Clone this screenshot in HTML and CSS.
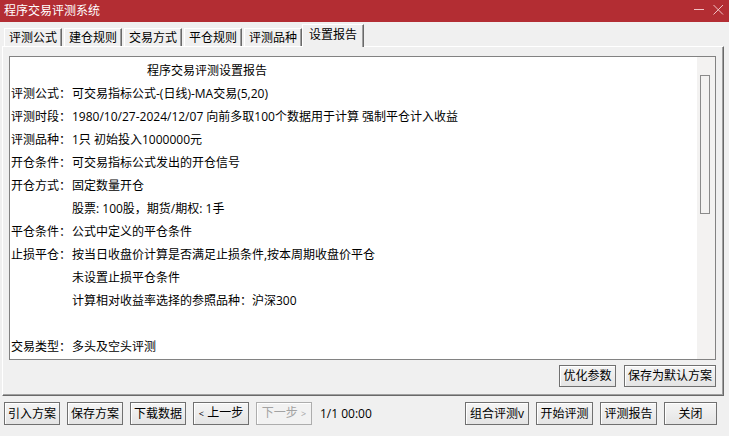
FILE: index.html
```html
<!DOCTYPE html>
<html lang="zh-CN">
<head>
<meta charset="utf-8">
<title>程序交易评测系统</title>
<link rel="stylesheet" href="styles.css">
</head>
<body>
<div class="window">
  <div class="titlebar">
    <span class="title">程序交易评测系统</span>
    <svg class="controls" width="32" height="22" viewBox="0 0 32 22">
      <line x1="1" y1="9.5" x2="11" y2="9.5" stroke="#f1c2c4" stroke-width="1"/>
      <path d="M20.5 5 L30 14.5 M30 5 L20.5 14.5" stroke="#f1c2c4" stroke-width="1" fill="none"/>
    </svg>
  </div>
  <div class="tabs">
    <div class="tab">评测公式</div>
    <div class="tab">建仓规则</div>
    <div class="tab">交易方式</div>
    <div class="tab">平仓规则</div>
    <div class="tab">评测品种</div>
    <div class="tab active">设置报告</div>
  </div>
  <div class="panel">
    <div class="report">
      <div class="report-body">
        <div class="line heading">程序交易评测设置报告</div>
        <div class="line"><span class="lbl">评测公式：</span><span>可交易指标公式-(日线)-MA交易(5,20)</span></div>
        <div class="line"><span class="lbl">评测时段：</span><span>1980/10/27-2024/12/07 向前多取100个数据用于计算 强制平仓计入收益</span></div>
        <div class="line"><span class="lbl">评测品种：</span><span>1只 初始投入1000000元</span></div>
        <div class="line"><span class="lbl">开仓条件：</span><span>可交易指标公式发出的开仓信号</span></div>
        <div class="line"><span class="lbl">开仓方式：</span><span>固定数量开仓</span></div>
        <div class="line indent">股票: 100股，期货/期权: 1手</div>
        <div class="line"><span class="lbl">平仓条件：</span><span>公式中定义的平仓条件</span></div>
        <div class="line"><span class="lbl">止损平仓：</span><span>按当日收盘价计算是否满足止损条件,按本周期收盘价平仓</span></div>
        <div class="line indent">未设置止损平仓条件</div>
        <div class="line indent">计算相对收益率选择的参照品种：沪深300</div>
        <div class="line"></div>
        <div class="line"><span class="lbl">交易类型：</span><span>多头及空头评测</span></div>
        <div class="line"></div>
      </div>
      <div class="scrollbar"><div class="thumb"></div></div>
    </div>
    <div class="panel-actions">
      <button class="btn w57">优化参数</button>
      <button class="btn w92">保存为默认方案</button>
    </div>
  </div>
  <div class="footer">
    <div class="group">
      <button class="btn w56">引入方案</button>
      <button class="btn w56">保存方案</button>
      <button class="btn w56">下载数据</button>
      <button class="btn w56"><span class="chev">&lt;</span> 上一步</button>
      <button class="btn w56 disabled">下一步 <span class="chev">&gt;</span></button>
      <span class="status">1/1 00:00</span>
    </div>
    <div class="group right">
      <button class="btn w64">组合评测v</button>
      <button class="btn w57">开始评测</button>
      <button class="btn w57">评测报告</button>
      <button class="btn w53">关闭</button>
    </div>
  </div>
</div>
</body>
</html>
```

FILE: styles.css
```css
* { box-sizing: border-box; }
html, body {
  margin: 0;
  padding: 0;
  width: 729px;
  height: 436px;
  overflow: hidden;
  background: #f0f0f0;
}
body {
  font-family: "Open Sans", "Noto Sans CJK SC", sans-serif;
  font-size: 12px;
  color: #000;
}
.window {
  width: 729px;
  height: 436px;
  display: flex;
  flex-direction: column;
  background: #f0f0f0;
}
.titlebar {
  height: 22px;
  background: #b32d33;
  display: flex;
  align-items: center;
  justify-content: space-between;
  padding-left: 4px;
  padding-right: 4px;
  flex-shrink: 0;
}
.title {
  color: #fff;
  font-size: 12px;
  line-height: 22px;
}
.controls { display: block; }

.tabs {
  height: 24px;
  display: flex;
  align-items: flex-end;
  padding-left: 4px;
  flex-shrink: 0;
}
.tab {
  width: 58px;
  height: 18px;
  margin-right: 2px;
  line-height: 17px;
  text-align: center;
  border-top: 1px solid #fff;
  border-left: 1px solid #fff;
  border-right: 1px solid #696969;
  box-shadow: inset -1px 0 0 #a0a0a0;
  background: #f0f0f0;
  white-space: nowrap;
}
.tab.active {
  width: 62px;
  height: 23px;
  margin-left: -2px;
  margin-bottom: -1px;
  line-height: 20px;
  position: relative;
  z-index: 2;
}

.panel {
  width: 722px;
  height: 350px;
  margin-left: 2px;
  border-top: 1px solid #fff;
  border-left: 1px solid #fff;
  border-right: 1px solid #696969;
  border-bottom: 1px solid #696969;
  box-shadow: inset -1px -1px 0 #a0a0a0;
  padding: 9px 6px 8px 6px;
  display: flex;
  flex-direction: column;
  flex-shrink: 0;
}
.report {
  width: 707px;
  height: 304px;
  border: 1px solid #828282;
  background: #fff;
  display: flex;
  overflow: hidden;
}
.report-body {
  flex: 1;
  padding: 2px 0 0 1px;
  overflow: hidden;
}
.line {
  height: 23px;
  line-height: 23px;
  display: flex;
  white-space: nowrap;
}
.lbl {
  width: 61px;
  flex-shrink: 0;
}
.indent { padding-left: 61px; }
.heading { padding-left: 136px; }

.scrollbar {
  width: 18px;
  flex-shrink: 0;
  background: #f3f2f1;
  padding: 18px 0 0 3px;
}
.thumb {
  width: 10px;
  height: 139px;
  border: 1px solid #8a8a8a;
  background: #f3f2f1;
}

.panel-actions {
  display: flex;
  justify-content: flex-end;
  gap: 8px;
  margin-top: 5px;
  padding-right: 1px;
}
.panel-actions .btn { height: 22px; }

.btn {
  height: 23px;
  padding: 0;
  border: 1px solid #707070;
  border-radius: 0;
  background: linear-gradient(#f5f5f5, #e4e4e4);
  box-shadow: inset 1px 1px 0 #fff;
  font-family: "Open Sans", "Noto Sans CJK SC", sans-serif;
  font-size: 12px;
  color: #000;
  line-height: 20px;
  text-align: center;
  white-space: nowrap;
}
.btn.disabled {
  color: #a3a3a3;
  border-color: #adadad;
  background: #f2f2f2;
}
.chev { font-size: 9px; }
.w53 { width: 53px; }
.w56 { width: 56px; }
.w57 { width: 57px; }
.w64 { width: 64px; }
.w92 { width: 92px; }

.footer {
  display: flex;
  justify-content: space-between;
  padding: 6px 12px 0 4px;
}
.group {
  display: flex;
  align-items: center;
  gap: 7px;
}
.status {
  margin-left: 1px;
  font-size: 12px;
}
```
